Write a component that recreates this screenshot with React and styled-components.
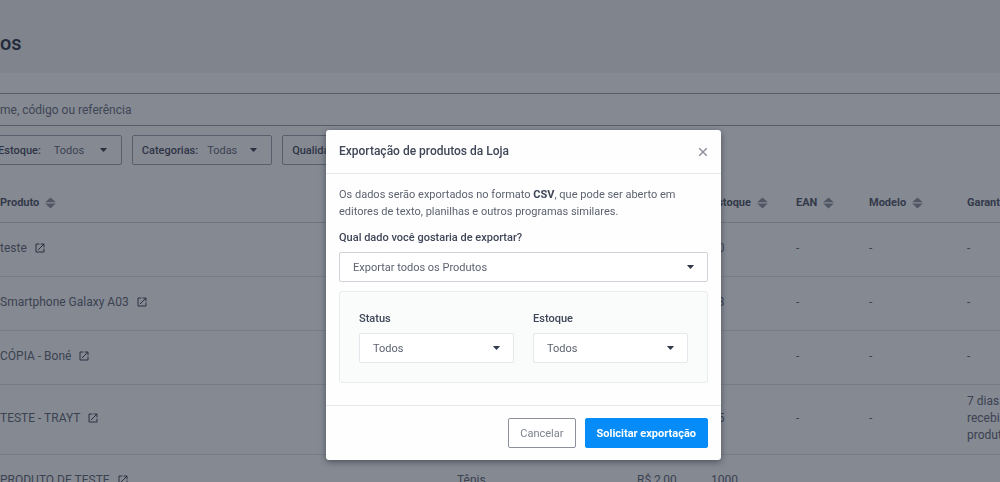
import React from "react";
import styled, {createGlobalStyle, css} from "styled-components";

const GlobalStyle = createGlobalStyle`
  *, *::before, *::after {
    box-sizing: border-box;
  }

  body {
    margin: 0;
    background: #ffffff;
    color: #5c6270;
    font-family: Roboto, "Open Sans", sans-serif;
    font-size: 11px;
    line-height: 17px;
  }

  button, input, select {
    font: inherit;
    color: inherit;
  }
`;

const Page = styled.div`
  height: 100vh;
  overflow: hidden;
`;

const PageHeader = styled.header`
  display: flex;
  align-items: center;
  height: 73px;
  padding-top: 12px;
  background: #f2f3f4;
`;

const PageTitle = styled.h1`
  margin: 0;
  color: #252b3a;
  font-size: 20px;
  line-height: 24px;
  font-weight: 500;
`;

const Content = styled.main`
  padding-top: 20px;
`;

const Search = styled.input`
  display: block;
  width: 100%;
  height: 33px;
  padding: 0;
  border: solid #9ca0a9;
  border-width: 1px 0;
  background: transparent;
  font-size: 12px;

  &::placeholder {
    color: #656b79;
    opacity: 1;
  }
`;

const Filters = styled.div`
  display: flex;
  gap: 10px;
  margin: 9px 0 0 -12px;
`;

const FilterBox = styled.div`
  display: flex;
  align-items: center;
  gap: ${props => props.$gap};
  height: 30px;
  padding-left: 9px;
  border: 1px solid #9ca0a9;
  border-radius: 2px;

  label {
    color: #3f4657;
    font-weight: 500;
    white-space: nowrap;
  }
`;

const SelectWrap = styled.div`
  position: relative;
  width: ${props => props.$width || "100%"};

  svg {
    position: absolute;
    top: 50%;
    right: 14px;
    margin-top: -2px;
    fill: #333a4b;
    pointer-events: none;
  }
`;

const SelectField = styled.select`
  display: block;
  width: 100%;
  height: 30px;
  padding: 0 24px 0 13px;
  border: 1px solid ${props => props.$light ? "#e4e7eb" : "#d0d3d9"};
  border-radius: 2px;
  background: #ffffff;
  appearance: none;

  ${props => props.$plain && css`
    height: 28px;
    padding: 0 24px 0 0;
    border: 0;
    background: transparent;
  `}
`;

const Table = styled.table`
  width: calc(100% + 60px);
  margin-top: 19px;
  border-collapse: collapse;
  table-layout: fixed;
  font-size: 12px;

  th, td {
    padding: 0;
    text-align: left;
    vertical-align: middle;
  }

  th {
    height: 38px;
    border-bottom: 1px solid #cfd2d8;
    color: #4b5160;
    font-weight: 700;
    font-size: 11px;
  }

  td {
    height: 54px;
    padding: 8px 0 10px;
    border-bottom: 1px solid #e1e3e7;
  }
`;

const Col = styled.col`
  width: ${props => props.$width};
`;

const HeadCell = styled.span`
  display: flex;
  align-items: center;
  gap: 6px;

  svg {
    fill: #8b909b;
  }
`;

const ProductLink = styled.a`
  display: flex;
  align-items: center;
  gap: 8px;
  color: inherit;
  text-decoration: none;
`;

const Overlay = styled.div`
  position: fixed;
  inset: 0;
  display: flex;
  align-items: flex-start;
  justify-content: center;
  padding: 130px 0 0 47px;
  background: rgba(33, 40, 56, 0.55);
`;

const Dialog = styled.section`
  width: 100%;
  max-width: 395px;
  border-radius: 3px;
  background: #fefefe;
  box-shadow: 0 2px 6px rgba(20, 25, 38, 0.5);
`;

const DialogHeader = styled.header`
  display: flex;
  align-items: center;
  justify-content: space-between;
  height: 44px;
  padding: 0 13px;
  border-bottom: 1px solid #e4e7eb;
`;

const DialogTitle = styled.h2`
  margin: 0;
  color: #3f4657;
  font-size: 12px;
  font-weight: 500;
`;

const CloseButton = styled.button`
  display: flex;
  padding: 0;
  border: 0;
  background: none;
  color: #8b909b;
  cursor: pointer;
`;

const DialogBody = styled.div`
  padding: 12px 13px 22px;
`;

const Text = styled.p`
  margin: 0 0 9px;

  strong {
    color: #3f4657;
  }
`;

const Label = styled.label`
  display: block;
  margin-bottom: 6px;
  color: #3f4657;
  font-weight: 500;
`;

const OptionsBox = styled.div`
  display: grid;
  grid-template-columns: 1fr 1fr;
  gap: 19px;
  margin-top: 9px;
  padding: 18px 19px 19px;
  border: 1px solid #e9ecef;
  border-radius: 3px;
  background: #fafbfb;
`;

const DialogFooter = styled.footer`
  display: flex;
  justify-content: flex-end;
  gap: 9px;
  padding: 12px 13px;
  border-top: 1px solid #e4e7eb;
`;

const Button = styled.button`
  height: 30px;
  padding: 0 11px;
  border: 1px solid #8b909b;
  border-radius: 2px;
  background: #ffffff;
  color: #7c828e;
  cursor: pointer;

  ${props => props.$primary && css`
    border-color: #058cf9;
    background: #058cf9;
    color: #ffffff;
    font-weight: 700;
  `}
`;

const Caret = () => (
  <svg width="7" height="4" viewBox="0 0 7 4" aria-hidden="true">
    <path d="M.5 0h6Q7 .2 6.7.6L4 3.6q-.5.5-1 0L.3.6Q0 .2.5 0Z" />
  </svg>
);

const SortIcon = () => (
  <svg width="11" height="12" viewBox="0 0 11 12" aria-hidden="true">
    <path d="M5.5.4 10.8 5.3H.2ZM.2 6.5h10.6L5.5 11.4Z" />
  </svg>
);

const ExternalIcon = () => (
  <svg width="10" height="10" viewBox="0 0 10 10" fill="none" stroke="#333a4b" aria-hidden="true">
    <path d="M4.4 1H1v8h8V5.6M5.6 1H9v3.4M9 1 3 7" />
  </svg>
);

const CloseIcon = () => (
  <svg width="10" height="10" viewBox="0 0 10 10" fill="none" stroke="currentColor" strokeWidth="1.4" aria-hidden="true">
    <path d="m1.2 1.2 7.6 7.6M8.8 1.2 1.2 8.8" />
  </svg>
);

function Select({id, value, width, light, plain}) {
  return(
    <SelectWrap $width={width}>
      <SelectField id={id} $light={light} $plain={plain}>
        <option>{value}</option>
      </SelectField>
      <Caret />
    </SelectWrap>
  );
}

function Filter({id, label, value, width, gap}) {
  return(
    <FilterBox $gap={gap}>
      <label htmlFor={id}>{label}</label>
      <Select id={id} value={value} width={width} plain />
    </FilterBox>
  );
}

const columns = [
  {name: "Produto"},
  {name: "Categoria", width: "180px"},
  {name: "Preço", width: "74px"},
  {name: "Estoque", width: "85px"},
  {name: "EAN", width: "73px"},
  {name: "Modelo", width: "98px"},
  {name: "Garantia", width: "93px"},
];

const products = [
  {name: "teste", stock: "10", ean: "-", model: "-", warranty: "-"},
  {name: "Smartphone Galaxy A03", stock: "13", ean: "-", model: "-", warranty: "-"},
  {name: "CÓPIA - Boné", stock: "0", ean: "-", model: "-", warranty: "-"},
  {name: "TESTE - TRAYT", stock: "15", ean: "-", model: "-", warranty: "7 dias após o recebimento do produto"},
  {name: "PRODUTO DE TESTE", category: "Tênis", price: "R$ 2,00", stock: "1000"},
];

function ExportDialog() {
  return(
    <Overlay>
      <Dialog role="dialog" aria-modal="true" aria-labelledby="export-title">
        <DialogHeader>
          <DialogTitle id="export-title">Exportação de produtos da Loja</DialogTitle>
          <CloseButton type="button" aria-label="Fechar"><CloseIcon /></CloseButton>
        </DialogHeader>
        <DialogBody>
          <Text>
            Os dados serão exportados no formato <strong>CSV</strong>, que pode ser aberto em
            editores de texto, planilhas e outros programas similares.
          </Text>
          <Label htmlFor="export-data">Qual dado você gostaria de exportar?</Label>
          <Select id="export-data" value="Exportar todos os Produtos" />
          <OptionsBox>
            <div>
              <Label htmlFor="export-status">Status</Label>
              <Select id="export-status" value="Todos" light />
            </div>
            <div>
              <Label htmlFor="export-stock">Estoque</Label>
              <Select id="export-stock" value="Todos" light />
            </div>
          </OptionsBox>
        </DialogBody>
        <DialogFooter>
          <Button type="button">Cancelar</Button>
          <Button type="button" $primary>Solicitar exportação</Button>
        </DialogFooter>
      </Dialog>
    </Overlay>
  );
}

export default function App() {
  return(
    <Page>
      <GlobalStyle />
      <PageHeader>
        <PageTitle>os</PageTitle>
      </PageHeader>
      <Content>
        <Search type="search" aria-label="Buscar" placeholder="me, código ou referência" />
        <Filters>
          <Filter id="filter-stock" label="Estoque:" value="Todos" width="67px" gap="13px" />
          <Filter id="filter-category" label="Categorias:" value="Todas" width="64px" gap="9px" />
          <Filter id="filter-quality" label="Qualidade:" value="Todas" width="64px" gap="9px" />
        </Filters>
        <Table>
          <colgroup>
            {columns.map(column => <Col key={column.name} $width={column.width} />)}
          </colgroup>
          <thead>
            <tr>
              {columns.map(column => (
                <th key={column.name}>
                  <HeadCell>{column.name}<SortIcon /></HeadCell>
                </th>
              ))}
            </tr>
          </thead>
          <tbody>
            {products.map(product => (
              <tr key={product.name}>
                <td><ProductLink href="#">{product.name}<ExternalIcon /></ProductLink></td>
                <td>{product.category}</td>
                <td>{product.price}</td>
                <td>{product.stock}</td>
                <td>{product.ean}</td>
                <td>{product.model}</td>
                <td>{product.warranty}</td>
              </tr>
            ))}
          </tbody>
        </Table>
      </Content>
      <ExportDialog />
    </Page>
  );
}
